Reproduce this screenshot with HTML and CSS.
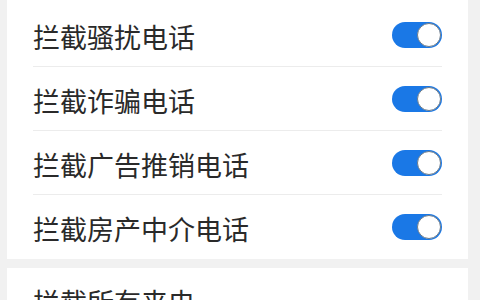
FILE: index.html
```html
<!DOCTYPE html>
<html lang="zh-CN">
<head>
<meta charset="utf-8">
<title>来电拦截</title>
<link rel="stylesheet" href="styles.css">
</head>
<body>
<div class="page">
  <section class="card card-first">
    <div class="row"><span class="label">拦截骚扰电话</span><span class="switch on"><span class="knob"></span></span></div>
    <div class="row"><span class="label">拦截诈骗电话</span><span class="switch on"><span class="knob"></span></span></div>
    <div class="row"><span class="label">拦截广告推销电话</span><span class="switch on"><span class="knob"></span></span></div>
    <div class="row last"><span class="label">拦截房产中介电话</span><span class="switch on"><span class="knob"></span></span></div>
  </section>
  <section class="card">
    <div class="row last"><span class="label">拦截所有来电</span></div>
  </section>
</div>
</body>
</html>
```

FILE: styles.css
```css
html, body {
  margin: 0;
  padding: 0;
  background: #f1f1f1;
}
body {
  font-family: "Noto Sans CJK SC", "Noto Sans", sans-serif;
  color: #2a2a2a;
  overflow: hidden;
}
.page {
  display: flex;
  flex-direction: column;
  gap: 9px;
  margin: 0 12px 0 7px;
}
.card {
  background: #ffffff;
  display: flex;
  flex-direction: column;
  padding: 0 26px;
}
.card-first {
  padding-top: 3px;
}
.row {
  height: 63px;
  display: flex;
  align-items: center;
  justify-content: space-between;
  border-bottom: 1px solid #ececec;
}
.row.last {
  height: 64px;
  border-bottom: none;
}
.label {
  font-size: 27px;
  line-height: 1;
  padding-top: 3px;
}
.switch {
  width: 50px;
  height: 26px;
  border-radius: 13px;
  background: #1a78e6;
  display: flex;
  align-items: center;
  justify-content: flex-end;
  padding: 0 1px;
  box-sizing: border-box;
}
.knob {
  width: 24px;
  height: 24px;
  border-radius: 50%;
  background: #ffffff;
  box-sizing: border-box;
  border: 1.5px solid #6f7c88;
}
```
